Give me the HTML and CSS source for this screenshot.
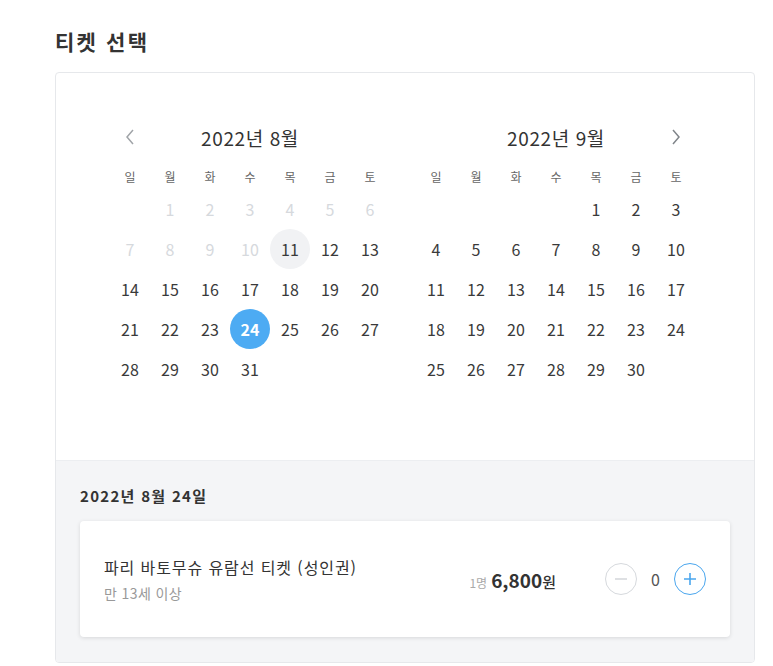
FILE: index.html
```html
<!DOCTYPE html>
<html lang="ko">
<head>
<meta charset="utf-8">
<link rel="stylesheet" href="styles.css">
</head>
<body>
<div class="page">
  <h2 class="title">티켓 선택</h2>
  <div class="box">
    <div class="calendars">
      <div class="cal">
        <div class="cal-head">
          <span class="nav"><svg width="10" height="16" viewBox="0 0 10 16"><path d="M8 1 L2 8 L8 15" fill="none" stroke="#a0a4a8" stroke-width="1.5"/></svg></span>
          <span class="month">2022년 8월</span>
          <span class="nav"></span>
        </div>
        <div class="grid dow">
          <span>일</span><span>월</span><span>화</span><span>수</span><span>목</span><span>금</span><span>토</span>
        </div>
        <div class="grid days">
          <span></span><span class="off">1</span><span class="off">2</span><span class="off">3</span><span class="off">4</span><span class="off">5</span><span class="off">6</span>
          <span class="off">7</span><span class="off">8</span><span class="off">9</span><span class="off">10</span><span class="today">11</span><span>12</span><span>13</span>
          <span>14</span><span>15</span><span>16</span><span>17</span><span>18</span><span>19</span><span>20</span>
          <span>21</span><span>22</span><span>23</span><span class="sel">24</span><span>25</span><span>26</span><span>27</span>
          <span>28</span><span>29</span><span>30</span><span>31</span>
        </div>
      </div>
      <div class="cal">
        <div class="cal-head">
          <span class="nav"></span>
          <span class="month">2022년 9월</span>
          <span class="nav"><svg width="10" height="16" viewBox="0 0 10 16"><path d="M2 1 L8 8 L2 15" fill="none" stroke="#80858a" stroke-width="1.5"/></svg></span>
        </div>
        <div class="grid dow">
          <span>일</span><span>월</span><span>화</span><span>수</span><span>목</span><span>금</span><span>토</span>
        </div>
        <div class="grid days">
          <span></span><span></span><span></span><span></span><span>1</span><span>2</span><span>3</span>
          <span>4</span><span>5</span><span>6</span><span>7</span><span>8</span><span>9</span><span>10</span>
          <span>11</span><span>12</span><span>13</span><span>14</span><span>15</span><span>16</span><span>17</span>
          <span>18</span><span>19</span><span>20</span><span>21</span><span>22</span><span>23</span><span>24</span>
          <span>25</span><span>26</span><span>27</span><span>28</span><span>29</span><span>30</span>
        </div>
      </div>
    </div>
    <div class="tickets">
      <div class="date">2022년 8월 24일</div>
      <div class="card">
        <div class="info">
          <div class="name">파리 바토무슈 유람선 티켓 (성인권)</div>
          <div class="age">만 13세 이상</div>
        </div>
        <div class="price"><span class="per">1명</span> <span class="amount">6,800</span><span class="won">원</span></div>
        <div class="counter">
          <span class="btn minus"><svg width="14" height="14" viewBox="0 0 14 14"><path d="M1 7 H13" stroke="#d3d6da" stroke-width="1.6"/></svg></span>
          <span class="qty">0</span>
          <span class="btn plus"><svg width="14" height="14" viewBox="0 0 14 14"><path d="M1 7 H13 M7 1 V13" stroke="#4aa6ee" stroke-width="1.6"/></svg></span>
        </div>
      </div>
    </div>
  </div>
</div>
</body>
</html>
```
FILE: styles.css
```css
* { box-sizing: border-box; }
body {
  margin: 0;
  background: #fff;
  font-family: "Noto Sans CJK KR", "Noto Sans", sans-serif;
  color: #333;
}
.page {
  padding: 27px 0 0 55px;
}
.title {
  margin: 0 0 16px;
  font-size: 21px;
  line-height: 29px;
  font-weight: 700;
  letter-spacing: 2.2px;
  color: #333;
}
.box {
  width: 700px;
  border: 1px solid #e6e8eb;
  border-radius: 4px;
  overflow: hidden;
}
.calendars {
  display: flex;
  gap: 26px;
  padding: 44px 0 71px 54px;
}
.cal { width: 280px; }
.cal-head {
  display: flex;
  align-items: center;
  height: 40px;
}
.nav {
  width: 40px;
  display: flex;
  justify-content: center;
  align-items: center;
}
.nav svg { display: block; }
.month {
  flex: 1;
  text-align: center;
  font-size: 19px;
  letter-spacing: 0.6px;
  font-weight: 400;
  color: #333;
}
.grid {
  display: grid;
  grid-template-columns: repeat(7, 40px);
}
.dow {
  margin-top: 10px;
  height: 20px;
}
.dow span {
  text-align: center;
  font-size: 12px;
  line-height: 20px;
  color: #666;
}
.days { margin-top: 2px; }
.days span {
  height: 40px;
  display: flex;
  align-items: center;
  justify-content: center;
  font-size: 16px;
  color: #3a3a3a;
  border-radius: 50%;
}
.days .off { color: #d6d9dd; }
.days .today { background: #f1f2f4; }
.days .sel {
  background: #4dabf3;
  color: #fff;
  font-weight: 700;
}
.tickets {
  background: #f4f5f7;
  border-top: 1px solid #eceef1;
  padding: 24px 24px 25px;
}
.date {
  font-size: 15px;
  line-height: 21px;
  font-weight: 700;
  letter-spacing: 1.3px;
  color: #333;
}
.card {
  margin-top: 15px;
  background: #fff;
  border-radius: 4px;
  box-shadow: 0 1px 4px rgba(0, 0, 0, 0.12);
  height: 116px;
  display: flex;
  align-items: center;
  padding: 0 24px;
}
.info { flex: 1; }
.name {
  font-size: 16px;
  line-height: 22px;
  font-weight: 400;
  letter-spacing: 0.9px;
  color: #333;
}
.age {
  margin-top: 6px;
  font-size: 14px;
  line-height: 18px;
  letter-spacing: 0.4px;
  color: #999;
}
.price {
  display: flex;
  align-items: baseline;
  margin-right: 49px;
}
.per {
  font-size: 12px;
  color: #aaa;
  margin-right: 4px;
}
.amount {
  font-size: 19px;
  font-weight: 700;
  color: #333;
}
.won {
  font-size: 15px;
  font-weight: 500;
  color: #333;
}
.counter {
  display: flex;
  align-items: center;
}
.btn {
  width: 32px;
  height: 32px;
  border-radius: 50%;
  display: flex;
  align-items: center;
  justify-content: center;
  background: #fff;
}
.btn svg { display: block; }
.minus { border: 1px solid #d6d9dd; }
.plus { border: 1px solid #4aa6ee; }
.qty {
  width: 37px;
  text-align: center;
  font-size: 16px;
  color: #555;
}
```
